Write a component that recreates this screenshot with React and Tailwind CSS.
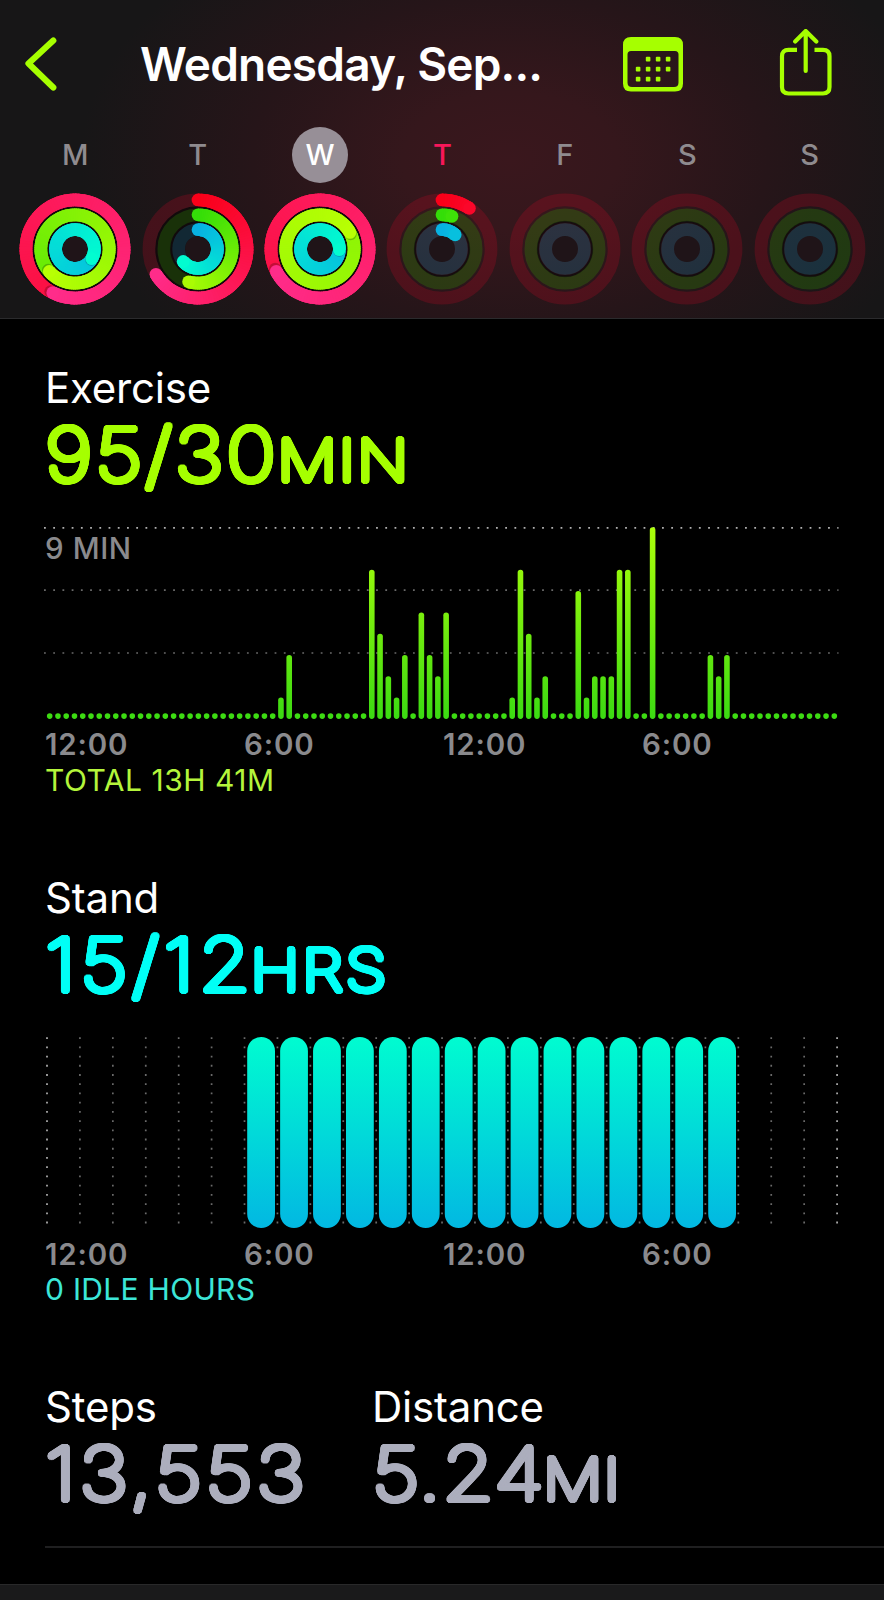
import React from 'react';

const DAYS = [
  { label: 'M', move: 567, exercise: 589, stand: 480 },
  { label: 'T', move: 239, exercise: 196, stand: 230 },
  { label: 'W', move: 603, exercise: 1141, stand: 452, selected: true },
  { label: 'T', move: 34, exercise: 17, stand: 43, today: true },
  { label: 'F' },
  { label: 'S' },
  { label: 'S' },
];

const RINGS = [
  { key: 'move', r: 49.4, from: [250, 0, 25], to: [255, 44, 138], track: '#c00822' },
  { key: 'exercise', r: 34.4, from: [52, 222, 8], to: [184, 255, 4], track: '#30a800' },
  { key: 'stand', r: 19.5, from: [8, 178, 226], to: [2, 252, 208], track: '#1284ac' },
];

// minutes of exercise per quarter hour, keyed by slot
const EXERCISE = {
  28: 1, 29: 3, 39: 7, 40: 4, 41: 2, 42: 1, 43: 3, 45: 5, 46: 3, 47: 2, 48: 5,
  56: 1, 57: 7, 58: 4, 59: 1, 60: 2, 64: 6, 65: 1, 66: 2, 67: 2, 68: 2, 69: 7, 70: 7,
  73: 9, 80: 3, 81: 2, 82: 3,
};

const HOURS = ['12:00', '6:00', '12:00', '6:00'];

// thickens thin glyphs evenly so that their ends come out round
const ROUND_STROKE = Array.from({ length: 24 }, (_, i) => {
  const a = (i / 24) * 2 * Math.PI;
  return `${(2.95 * Math.cos(a)).toFixed(2)}px ${(3.15 * Math.sin(a)).toFixed(2)}px 0 currentColor`;
}).join(', ');

function point(r, deg) {
  const a = (deg * Math.PI) / 180;
  return [r * Math.sin(a), -r * Math.cos(a)];
}

function mix(from, to, t) {
  return `rgb(${from.map((c, i) => Math.round(c + (to[i] - c) * t)).join(',')})`;
}

function Ring({ ring, degrees }) {
  const start = Math.max(0, degrees - 360);
  const span = Math.max(degrees, 220);
  const step = 3;
  const parts = [];
  for (let a = start; a < degrees; a += step) {
    const end = Math.min(a + step + 5, degrees);
    const [x1, y1] = point(ring.r, a);
    const [x2, y2] = point(ring.r, end);
    parts.push(
      <path
        key={a}
        d={`M${x1} ${y1}A${ring.r} ${ring.r} 0 0 1 ${x2} ${y2}`}
        stroke={mix(ring.from, ring.to, a / span)}
        strokeWidth="12.8"
        fill="none"
      />
    );
  }
  const [sx, sy] = point(ring.r, 0);
  const [ex, ey] = point(ring.r, degrees);
  const [hx, hy] = point(ring.r, degrees + 3);
  return (
    <g>
      {degrees < 360 && <circle cx={sx} cy={sy} r="6.4" fill={mix(ring.from, ring.to, 0)} />}
      {parts}
      {degrees > 360 && <circle cx={hx} cy={hy} r="6.2" fill="#000" opacity="0.22" />}
      <circle cx={ex} cy={ey} r="6.4" fill={mix(ring.from, ring.to, degrees / span)} />
    </g>
  );
}

function ActivityRings({ day }) {
  const active = day.move > 0;
  return (
    <svg className="h-[112px] w-[112px]" viewBox="-56.4 -56.4 112.8 112.8" aria-hidden="true">
      {active && !day.today && <circle r="43" fill="#120a0c" />}
      <circle r="27.4" fill="none" stroke="#120a0c" strokeWidth="2.2" opacity="0.8" />
      <circle r="13" fill="#1f1418" />
      {RINGS.map((ring) => (
        <circle key={ring.key} r={ring.r} fill="none" stroke={ring.track} strokeWidth="12.8" opacity="0.25" />
      ))}
      {active && RINGS.map((ring) => <Ring key={ring.key} ring={ring} degrees={day[ring.key]} />)}
    </svg>
  );
}

function Header() {
  return (
    <header className="h-[319px] border-b border-[#2b2b2d] bg-[#171617] bg-[radial-gradient(ellipse_430px_270px_at_510px_160px,#3a171d_0%,#35171c_25%,#261519_60%,#171617_100%)]">
      <div className="flex h-[127px] items-center pl-[22px] pr-[48px]">
        <svg className="h-[56px] w-[36px]" viewBox="0 0 36 56" fill="none" stroke="#a6ff00" strokeWidth="6.2" strokeLinecap="round" strokeLinejoin="round">
          <path d="M31.300 4.500L6.500 27.500L31.300 51.500" />
        </svg>
        <h1 className="ml-[82px] w-[420px] whitespace-nowrap text-[46px] font-semibold leading-none tracking-[-0.8px] text-white">Wednesday, Sep...</h1>
        <svg className="ml-[62px] h-[56px] w-[62px]" viewBox="0 0 62 56" fill="#a6ff00">
          <path fillRule="evenodd" d="M9 1H53Q61 1 61 9V47.500Q61 55.500 53 55.500H9Q1 55.500 1 47.500V9Q1 1 9 1ZM9 15Q5.500 15 5.500 18.500V46.500Q5.500 51 10 51H52Q56.500 51 56.500 46.500V18.500Q56.500 15 53 15Z" />
          {[[26, 23], [36, 23], [46, 23], [16, 33], [26, 33], [36, 33], [46, 33], [16, 43], [26, 43], [36, 43]].map(([x, y]) => (
            <rect key={`${x}-${y}`} x={x - 2.2} y={y - 2.2} width="4.6" height="4.6" rx="1" />
          ))}
        </svg>
        <svg className="ml-auto h-[70px] w-[58px]" viewBox="1 1 58 70" fill="none" stroke="#a6ff00" strokeWidth="4.200" strokeLinecap="round" strokeLinejoin="round">
          <path strokeLinecap="butt" d="M20 21.800H11.500Q5 21.800 5 28.300V59Q5 65.500 11.500 65.500H46Q52.500 65.500 52.500 59V28.300Q52.500 21.800 46 21.800H37.500" />
          <path d="M28.700 43V4M18.200 13.500L28.700 3L39.300 13.500" />
        </svg>
      </div>
      <div className="flex pl-[14px] pr-[13px]">
        {DAYS.map((day, i) => (
          <div key={i} className="flex flex-1 flex-col items-center">
            <span
              className={`flex h-[56px] w-[56px] items-center justify-center rounded-full text-[29px] font-[550] ${
                day.selected ? 'bg-[#978f97] text-white' : day.today ? 'text-[#f8175a]' : 'text-[#8f8b8f]'
              }`}
            >
              {day.label}
            </span>
            <div className="mt-[10px]">
              <ActivityRings day={day} />
            </div>
          </div>
        ))}
      </div>
    </header>
  );
}

function Metric({ title, value, unit, className, valueClassName = 'tracking-[3px]', unitClassName = '' }) {
  return (
    <div>
      <h2 className="h-[48px] text-[42px] leading-[48px] tracking-[-0.2px] text-white">{title}</h2>
      <p
        className={`mt-[4px] h-[78px] origin-left scale-x-[1.15] whitespace-nowrap text-[73px] font-thin leading-[78px] ${className}`}
        style={{ textShadow: ROUND_STROKE }}
      >
        <span className={valueClassName}>{value}</span>
        {unit && <span className={`text-[58px] ${unitClassName}`}>{unit}</span>}
      </p>
    </div>
  );
}

function HourAxis() {
  return (
    <div className="grid w-[796px] grid-cols-4 text-[29.500px] font-semibold leading-[36px] tracking-[0.8px] text-[#8a8a8d]">
      {HOURS.map((hour, i) => (
        <span key={i}>{hour}</span>
      ))}
    </div>
  );
}

function ExerciseChart() {
  return (
    <div className="relative mt-[26px] h-[206px]">
      <svg className="-ml-[45px] h-[206px] w-[884px]" viewBox="0 520 884 206">
        <defs>
          <linearGradient id="exercise" gradientUnits="userSpaceOnUse" x1="0" y1="527" x2="0" y2="719">
            <stop offset="0" stopColor="#adff0a" />
            <stop offset="1" stopColor="#3bdb12" />
          </linearGradient>
        </defs>
        {[527.8, 590.2, 653].map((y, i) => (
          <line key={y} x1="44" x2="838.500" y1={y} y2={y} stroke={i === 0 ? '#b0b0b0' : '#6a6a6a'} strokeWidth="1.700" strokeDasharray="1.8 7.424" />
        ))}
        {Array.from({ length: 96 }, (_, i) => {
          const minutes = EXERCISE[i] || 0;
          const height = minutes ? minutes * 21.3 : 5.6;
          return <rect key={i} x={49.7 + i * 8.259 - 2.8} y={718.9 - height} width="5.600" height={height} rx="2.800" fill="url(#exercise)" />;
        })}
      </svg>
      <span className="absolute left-0 top-[10px] text-[29.500px] font-[550] leading-[36px] tracking-[0.6px] text-[#8a8a8d]">9 MIN</span>
    </div>
  );
}

function StandChart() {
  return (
    <svg className="-ml-[45px] mt-[26px] h-[206px] w-[884px]" viewBox="0 1030 884 206">
      <defs>
        <linearGradient id="stand" gradientUnits="userSpaceOnUse" x1="0" y1="1037" x2="0" y2="1228">
          <stop offset="0" stopColor="#00fcd0" />
          <stop offset="1" stopColor="#02b8e2" />
        </linearGradient>
      </defs>
      {Array.from({ length: 25 }, (_, i) => {
        const x = 47 + i * 32.92;
        const edge = i === 0 || i === 24;
        return <line key={i} x1={x} x2={x} y1="1037.200" y2="1224" stroke={edge ? '#b0b0b0' : '#6a6a6a'} strokeWidth="1.700" strokeDasharray="1.8 7.42" />;
      })}
      {Array.from({ length: 15 }, (_, i) => (
        <rect key={i} x={247.2 + i * 32.93} y="1037" width="27.800" height="191" rx="13.900" fill="url(#stand)" />
      ))}
    </svg>
  );
}

export default function App() {
  return (
    <div className="flex h-[1600px] w-[884px] flex-col overflow-hidden bg-black font-['Inter',sans-serif]">
      <Header />
      <main className="pl-[45px] pt-[45px]">
        <section className="h-[510px]">
          <Metric title="Exercise" value="95/30" unit="MIN" className="text-[#a6ff00]" valueClassName="tracking-[2.3px]" unitClassName="-ml-px tracking-[1.4px]" />
          <ExerciseChart />
          <HourAxis />
          <p className="text-[30px] leading-[36px] tracking-[0.5px] text-[#b4f53b]">TOTAL 13H 41M</p>
        </section>
        <section className="h-[509px]">
          <Metric title="Stand" value="15/12" unit="HRS" className="text-[#00fff6]" valueClassName="tracking-[3.8px]" unitClassName="-ml-[4px] tracking-[2.2px]" />
          <StandChart />
          <HourAxis />
          <p className="-mt-px text-[30px] leading-[36px] tracking-[0.3px] text-[#3ce6d8]">0 IDLE HOURS</p>
        </section>
        <section className="flex h-[165px] border-b-2 border-[#1f1f20]">
          <div className="w-[327px]">
            <Metric title="Steps" value="13,553" className="text-[#acaebd]" />
          </div>
          <Metric title="Distance" value="5.24" unit="MI" className="text-[#acaebd]" valueClassName="tracking-[1px]" unitClassName="-ml-[2px] tracking-[0.8px]" />
        </section>
      </main>
      <footer className="mt-auto h-[16px] border-t border-[#29292a] bg-[#1a1a1b]" />
    </div>
  );
}
